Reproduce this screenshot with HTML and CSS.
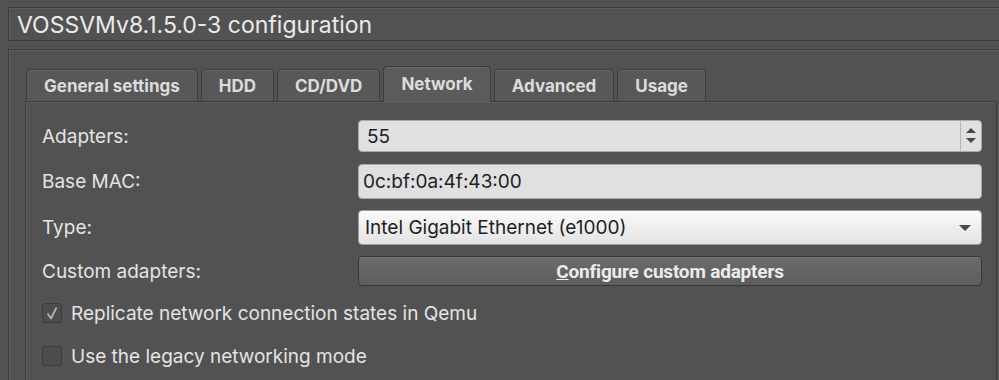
FILE: index.html
```html
<!DOCTYPE html>
<html lang="en">
<head>
    <meta charset="UTF-8">
    <title>VOSSVMv8.1.5.0-3 configuration</title>
    <link rel="stylesheet" href="styles.css">
</head>
<body>
    <div class="title-frame">
        <h1 class="title">VOSSVMv8.1.5.0-3 configuration</h1>
    </div>

    <div class="tab-frame">
        <div class="tabs">
            <div class="tab">General settings</div>
            <div class="tab">HDD</div>
            <div class="tab">CD/DVD</div>
            <div class="tab active">Network</div>
            <div class="tab">Advanced</div>
            <div class="tab">Usage</div>
        </div>

        <div class="pane">
            <div class="row row-spin">
                <label class="label">Adapters:</label>
                <div class="field spin">
                    <span class="value">55</span>
                    <div class="spin-arrows">
                        <svg width="12" height="20" viewBox="0 0 12 20">
                            <path d="M1 7 L6 2 L11 7 Z" fill="#474747"/>
                            <path d="M1 12 L11 12 L6 17 Z" fill="#474747"/>
                        </svg>
                    </div>
                </div>
            </div>

            <div class="row row-mac">
                <label class="label">Base MAC:</label>
                <div class="field text">0c:bf:0a:4f:43:00</div>
            </div>

            <div class="row row-type">
                <label class="label">Type:</label>
                <div class="field combo">
                    <span class="value">Intel Gigabit Ethernet (e1000)</span>
                    <svg class="combo-arrow" width="12" height="8" viewBox="0 0 12 8">
                        <path d="M0 1 L12 1 L6 7 Z" fill="#474747"/>
                    </svg>
                </div>
            </div>

            <div class="row row-btn">
                <label class="label">Custom adapters:</label>
                <button class="btn"><u>C</u>onfigure custom adapters</button>
            </div>

            <div class="check-row first">
                <span class="checkbox">
                    <svg width="18" height="18" viewBox="0 0 18 18">
                        <path d="M4.5 9.5 L8 14.5 L13.5 3.5" fill="none" stroke="#b2b2b2" stroke-width="1.8" stroke-linejoin="round"/>
                    </svg>
                </span>
                <span class="check-label">Replicate network connection states in Qemu</span>
            </div>

            <div class="check-row second">
                <span class="checkbox"></span>
                <span class="check-label">Use the legacy networking mode</span>
            </div>
        </div>
    </div>
</body>
</html>
```

FILE: styles.css
```css
* {
    margin: 0;
    padding: 0;
    box-sizing: border-box;
}

body {
    font-family: Inter, "Noto Sans", sans-serif;
    background-color: #525252;
    color: #e4e4e4;
    overflow: hidden;
    height: 380px;
}

.title-frame {
    margin: 7px 0 0 8px;
    height: 34px;
    border: 1px solid #3b3b3b;
    border-right: none;
    box-shadow: inset 1px 1px 0 #5e5e5e;
    padding-left: 8px;
}

.title {
    font-size: 23px;
    font-weight: normal;
    line-height: 35px;
    color: #ebebeb;
}

.tab-frame {
    margin: 8px 0 0 8px;
    border-top: 1px solid #3b3b3b;
    border-left: 1px solid #3b3b3b;
    box-shadow: inset 1px 1px 0 #5e5e5e;
    padding: 16px 2px 0 16px;
    height: 331px;
}

.tabs {
    display: flex;
    align-items: flex-end;
    gap: 3px;
    padding-left: 1px;
    height: 35px;
}

.tab {
    height: 32px;
    padding: 0 17px;
    background: #585858;
    border: 1px solid #3d3d3d;
    border-bottom: none;
    border-radius: 4px 4px 0 0;
    box-shadow: inset 0 1px 0 #676767;
    font-size: 17px;
    font-weight: bold;
    line-height: 32px;
    color: #dcdcdc;
}

.tab.active {
    height: 36px;
    margin-bottom: -1px;
    background: #5b5b5b;
    position: relative;
    line-height: 34px;
}

.pane {
    border-top: 1px solid #3d3d3d;
    border-left: 1px solid #3d3d3d;
    border-right: 1px solid #3d3d3d;
    box-shadow: inset 1px 1px 0 #5c5c5c;
    padding: 18px 14px 0 16px;
    height: 280px;
}

.row {
    display: flex;
    align-items: center;
}

.label {
    width: 316px;
    font-size: 19px;
    color: #e4e4e4;
}

.field {
    flex: 1;
    display: flex;
    align-items: center;
    border: 1px solid #a9a9a9;
    border-radius: 4px;
    background: #e0e0e0;
    color: #1e1e1e;
    font-size: 19px;
    padding-left: 8px;
}

.row-spin {
    height: 32px;
    margin-bottom: 12px;
}

.spin {
    height: 32px;
    padding-right: 0;
}

.spin .value {
    flex: 1;
}

.spin-arrows {
    width: 21px;
    height: 100%;
    border-left: 1px solid #b5b5b5;
    display: flex;
    align-items: center;
    justify-content: center;
}

.row-mac {
    height: 35px;
    margin-bottom: 11px;
}

.text {
    height: 35px;
    padding-left: 4px;
}

.row-type {
    height: 35px;
    margin-bottom: 11px;
}

.combo {
    height: 35px;
    padding-left: 6px;
    padding-right: 10px;
    background: linear-gradient(#fafafa, #e3e3e3);
    border-color: #9d9d9d;
}

.combo .value {
    flex: 1;
}

.row-btn {
    height: 30px;
}

.btn {
    flex: 1;
    height: 30px;
    border: 1px solid #383838;
    border-radius: 4px;
    background: linear-gradient(#6b6b6b, #5d5d5d);
    box-shadow: inset 0 1px 0 #777;
    color: #ececec;
    font-family: Roboto, "Liberation Sans", sans-serif;
    font-size: 19px;
    font-weight: bold;
    letter-spacing: -0.2px;
}

.check-row {
    display: flex;
    align-items: center;
    height: 20px;
    gap: 9px;
}

.check-row.first {
    margin-top: 17px;
}

.check-row.second {
    margin-top: 23px;
}

.checkbox {
    display: flex;
    width: 20px;
    height: 20px;
    border: 1px solid #3c3c3c;
    border-radius: 2px;
    background: #4c4c4c;
}

.check-label {
    font-size: 19px;
    color: #e4e4e4;
}
```
